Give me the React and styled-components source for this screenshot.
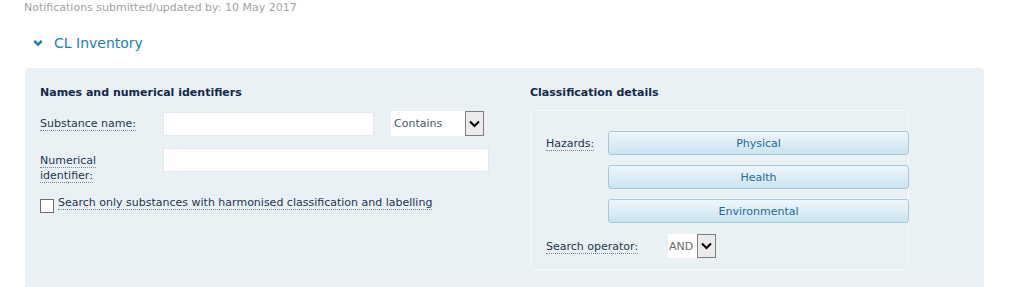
import React from 'react';
import styled, { createGlobalStyle } from 'styled-components';

const Global = createGlobalStyle`
  html, body { margin: 0; padding: 0; background: #fff; }
  body { font-family: "DejaVu Sans", Verdana, sans-serif; font-size: 11px; color: #1f2d3d; }
`;

const Page = styled.div`
  width: 1016px;
  height: 287px;
  overflow: hidden;
`;

const Submitted = styled.div`
  padding: 1px 0 0 24px;
  color: #a3a3a3;
  font-size: 11px;
  line-height: 13px;
`;

const SectionHead = styled.div`
  display: flex;
  align-items: center;
  gap: 11px;
  margin: 20px 0 0 33px;
  color: #1c7eb5;
  font-size: 14px;
  line-height: 18px;
  height: 18px;
`;

const Panel = styled.div`
  margin: 16px 0 0 25px;
  width: 959px;
  height: 240px;
  background: #e9f1f4;
  border-radius: 4px 4px 0 0;
  display: grid;
  grid-template-columns: 490px 380px;
  padding: 18px 0 0 15px;
  box-sizing: border-box;
`;

const Column = styled.div`
  display: flex;
  flex-direction: column;
`;

const Heading = styled.div`
  font-weight: bold;
  color: #13294b;
  font-size: 11px;
  line-height: 14px;
  height: 14px;
`;

const Row = styled.div`
  display: flex;
  align-items: ${p => p.$align || 'center'};
  margin-top: ${p => p.$top || 0}px;
`;

const Label = styled.span`
  width: ${p => p.$width}px;
  margin-top: ${p => p.$top || 0}px;
  flex: none;
  color: #1f3550;
  line-height: 15px;
  > span {
    border-bottom: 1px dotted #7a8a99;
  }
`;

const TextInput = styled.div`
  width: ${p => p.$width}px;
  height: 24px;
  background: #fff;
  border: 1px solid #dfe9ee;
  box-sizing: border-box;
`;

const Select = styled.div`
  display: flex;
  align-items: stretch;
  margin-left: ${p => p.$left || 0}px;
  width: ${p => p.$width}px;
  height: ${p => p.$height}px;
  background: #fff;
  color: ${p => p.$color};
  font-size: 11px;
  box-sizing: border-box;
`;

const SelectText = styled.span`
  flex: 1;
  display: flex;
  align-items: center;
  padding-left: ${p => p.$pad}px;
`;

const Arrow = styled.span`
  width: 19px;
  display: flex;
  align-items: center;
  justify-content: center;
  border: 1px solid #7d7d7d;
  background: #ebebeb;
  box-sizing: border-box;
`;

const Check = styled.span`
  width: 12px;
  height: 12px;
  border: 1px solid #6b6b6b;
  background: #fff;
  margin-right: 4px;
  margin-top: 4px;
  flex: none;
`;

const Box = styled.div`
  margin-top: 10px;
  width: 379px;
  height: 160px;
  border: 1px solid #f7fafb;
  border-radius: 5px;
  box-sizing: border-box;
  padding: 20px 0 0 15px;
  display: flex;
  flex-direction: column;
`;

const HazardButtons = styled.div`
  display: flex;
  flex-direction: column;
  gap: 10px;
`;

const HazardButton = styled.div`
  width: 301px;
  height: 24px;
  box-sizing: border-box;
  border: 1px solid #a9c7d6;
  border-radius: 3px;
  background: linear-gradient(#eef7fc, #cae4f1);
  color: #1b6c97;
  display: flex;
  align-items: center;
  justify-content: center;
  font-size: 11px;
`;

const Chevron = () => (
  <svg width="10" height="8" viewBox="0 0 10 8">
    <path d="M1.3 1.8 L5 5.6 L8.7 1.8" fill="none" stroke="#1c7eb5" strokeWidth="2.5" />
  </svg>
);

const SmallChevron = () => (
  <svg width="11" height="8" viewBox="0 0 11 8">
    <path d="M1 1.5 L5.5 6 L10 1.5" fill="none" stroke="#000" strokeWidth="2" />
  </svg>
);

export default function App() {
  return (
    <Page>
      <Global />
      <Submitted>Notifications submitted/updated by: 10 May 2017</Submitted>
      <SectionHead>
        <Chevron />
        <span>CL Inventory</span>
      </SectionHead>
      <Panel>
        <Column>
          <Heading>Names and numerical identifiers</Heading>
          <Row $top={11}>
            <Label $width={123}><span>Substance name:</span></Label>
            <TextInput $width={211} />
            <Select $left={17} $width={93} $height={25} $color="#4a5a66">
              <SelectText $pad={3}>Contains</SelectText>
              <Arrow><SmallChevron /></Arrow>
            </Select>
          </Row>
          <Row $top={12} $align="flex-start">
            <Label $width={123} $top={5}>
              <span>Numerical</span><br /><span>identifier:</span>
            </Label>
            <TextInput $width={326} />
          </Row>
          <Row $top={12} $align="flex-start">
            <Check />
            <Label><span>Search only substances with harmonised classification and labelling</span></Label>
          </Row>
        </Column>
        <Column>
          <Heading>Classification details</Heading>
          <Box>
            <Row $align="flex-start">
              <Label $width={62} $top={5}><span>Hazards:</span></Label>
              <HazardButtons>
                <HazardButton>Physical</HazardButton>
                <HazardButton>Health</HazardButton>
                <HazardButton>Environmental</HazardButton>
              </HazardButtons>
            </Row>
            <Row $top={11}>
              <Label $width={122}><span>Search operator:</span></Label>
              <Select $width={48} $height={24} $color="#6b6b6b">
                <SelectText $pad={1}>AND</SelectText>
                <Arrow><SmallChevron /></Arrow>
              </Select>
            </Row>
          </Box>
        </Column>
      </Panel>
    </Page>
  );
}
